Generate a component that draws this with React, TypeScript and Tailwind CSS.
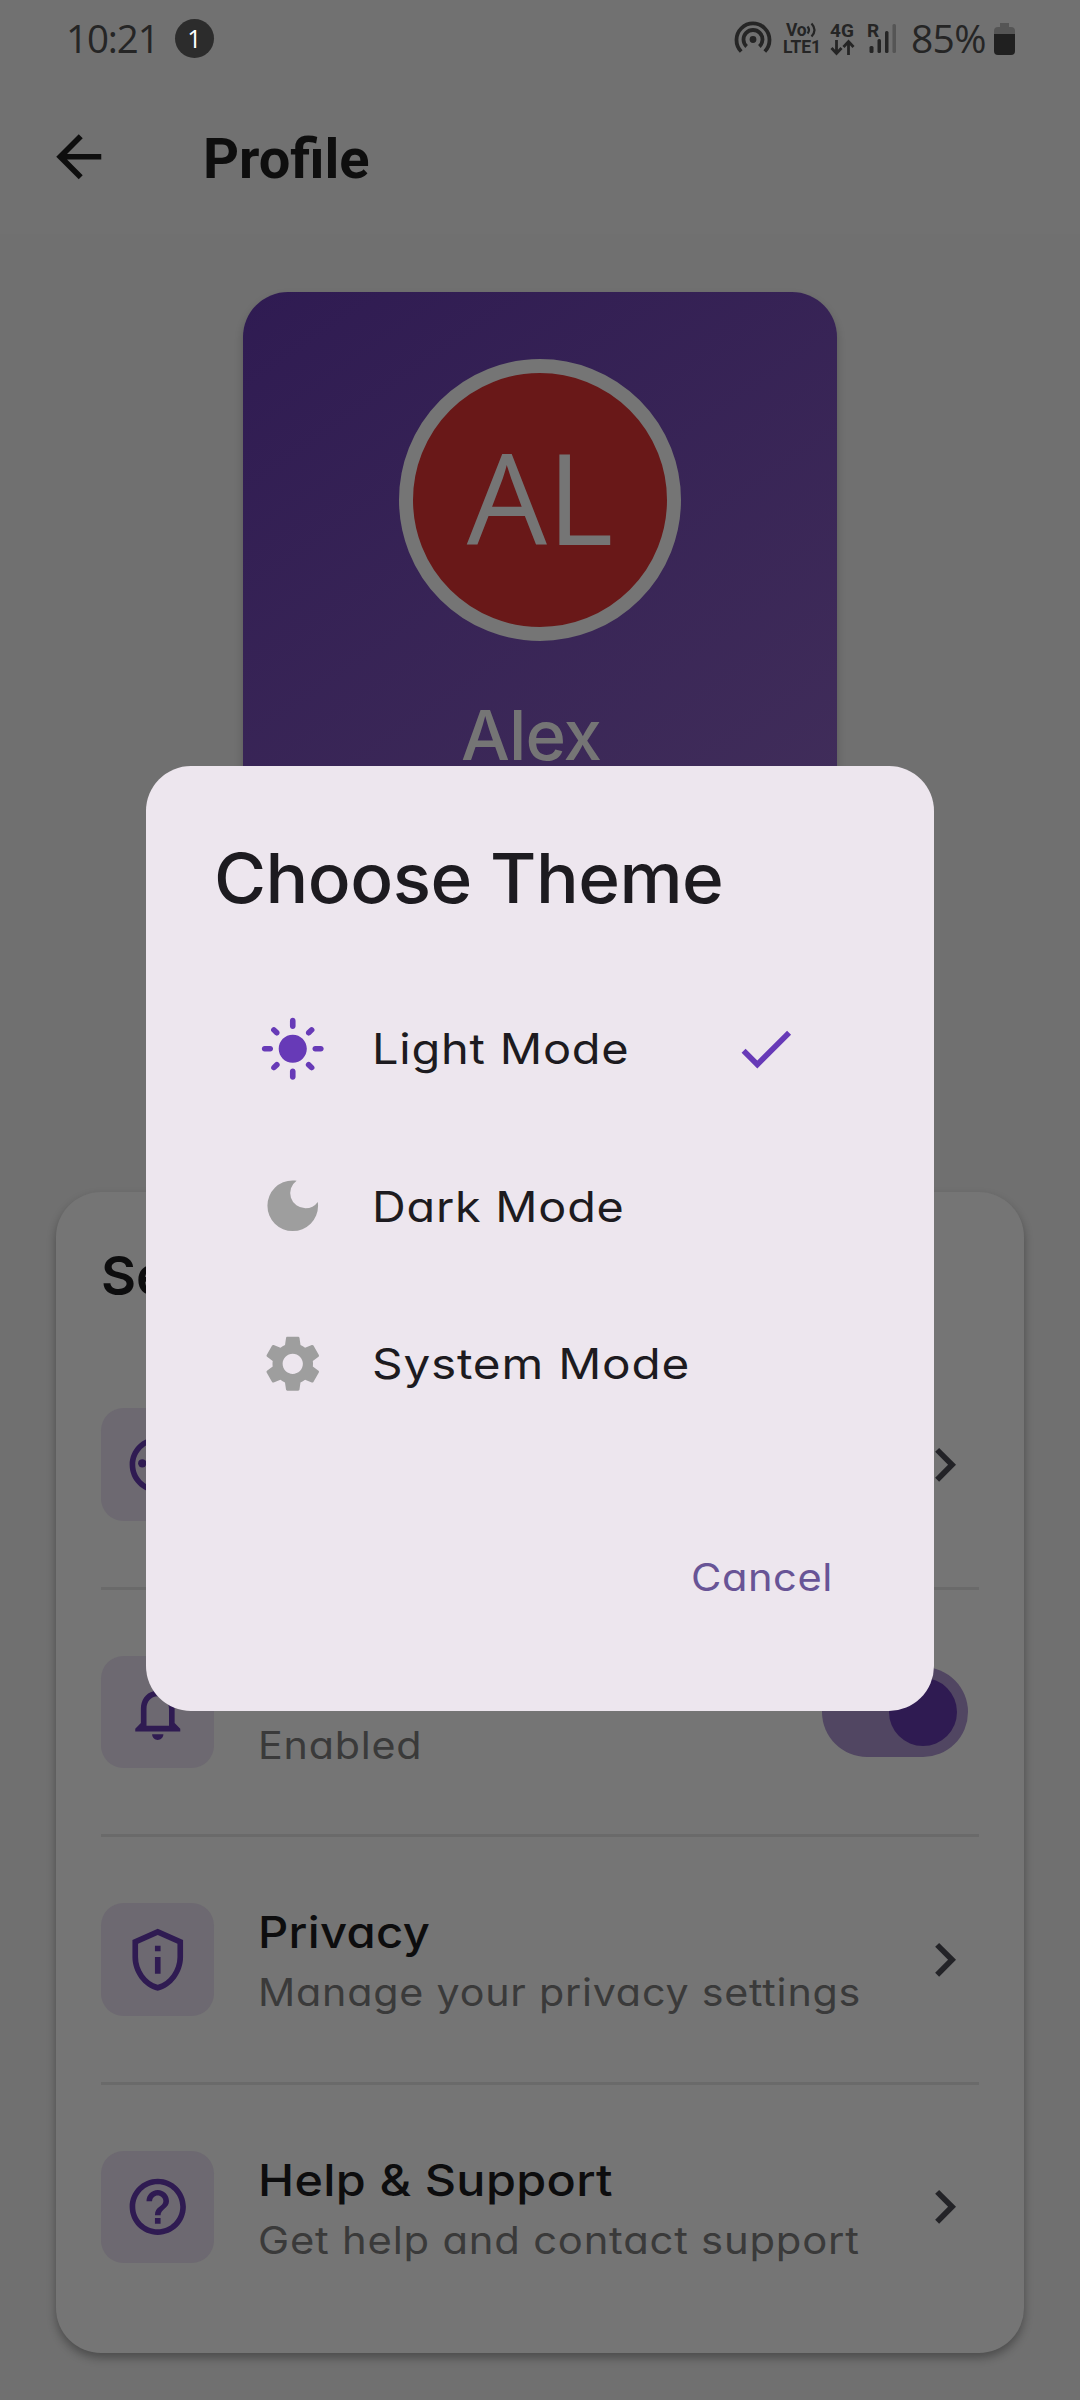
import type { ComponentType, ReactNode } from "react";
import {
  MdArrowBack,
  MdCheck,
  MdChevronRight,
  MdDarkMode,
  MdHelpOutline,
  MdLightMode,
  MdNotificationsNone,
  MdOutlinePalette,
  MdOutlinePrivacyTip,
  MdSettings,
} from "react-icons/md";

type Icon = ComponentType<{ className?: string }>;

function StatusBar() {
  return (
    <div className="flex h-[76px] items-center pl-[66px] pr-[65px] font-['Open_Sans',sans-serif] text-[#252525]">
      <span className="w-[109px] text-[38.5px] leading-[74px] tracking-[-1.1px]">10:21</span>
      <span className="flex size-[39px] items-center justify-center rounded-full bg-[#2c2c2c] text-[25px] leading-[36px] text-white">
        1
      </span>
      <div className="ml-auto flex h-[78px] items-center">
        <svg className="h-[36px] w-[38px]" viewBox="0 0 38 36" fill="none" stroke="currentColor" strokeWidth="3.8">
          <circle cx="19" cy="19.5" r="3.4" fill="currentColor" stroke="none" />
          <path d="M12.6 26.5a9.5 9.5 0 1 1 12.8 0" />
          <path d="M7.2 31.5a16.5 16.5 0 1 1 23.6 0" />
        </svg>
        <div className="mt-[2px] ml-[11px] flex w-[38px] flex-col font-['Roboto',sans-serif] text-[17.5px] leading-[17.5px] font-bold">
          <span className="flex items-center pl-[3px] tracking-[-0.3px]">
            Vo
            <svg className="h-[16px] w-[12px]" viewBox="0 0 12 16" fill="none" stroke="currentColor" strokeWidth="2.2">
              <path d="M1.5 4.5q3 3.500 0 7M5.500 1.500q6 6.500 0 13" />
            </svg>
          </span>
          <span className="tracking-[-0.1px]">LTE1</span>
        </div>
        <div className="mt-[1px] ml-[9px] flex w-[26px] flex-col font-['Roboto',sans-serif] text-[19px] leading-[17px] font-bold">
          <span>4G</span>
          <svg className="h-[17px] w-[25px]" viewBox="0 0 25 17" fill="none" stroke="currentColor" strokeWidth="2.8">
            <path d="M6.500 1v13M1.500 9l5 5.500 5-5.500M18.500 16V3M13.500 8l5-5.500 5 5.500" />
          </svg>
        </div>
        <div className="relative mt-[1px] ml-[11px] h-[34px] w-[30px] font-['Roboto',sans-serif]">
          <span className="absolute top-0 left-0 text-[19px] leading-[17px] font-bold">R</span>
          <svg className="absolute inset-0 h-[34px] w-[30px]" viewBox="0 0 30 34" fill="currentColor">
            <rect x="2.500" y="24" width="4" height="7" rx="1.500" />
            <rect x="10.500" y="17" width="3.500" height="14" rx="1.500" />
            <rect x="18" y="9" width="3.500" height="22" rx="1.500" />
            <rect x="25.500" y="2" width="3.500" height="29" rx="1.500" fill="#555555" />
          </svg>
        </div>
        <span className="ml-[14px] w-[83px] text-[39px] leading-[74px] tracking-[-0.7px]">85%</span>
        <svg className="mt-[1px] h-[32px] w-[21px]" viewBox="0 0 21 32">
          <path d="M6 0h9v4h2a4 4 0 0 1 4 4v4H0V8a4 4 0 0 1 4-4h2z" fill="#555555" />
          <path d="M0 11h21v17a4 4 0 0 1-4 4H4a4 4 0 0 1-4-4z" fill="#202020" />
        </svg>
      </div>
    </div>
  );
}

function ProfileCard() {
  return (
    <section className="mx-auto mt-[58px] flex h-[855px] w-[594px] flex-col items-center rounded-[45px] bg-[linear-gradient(145.2deg,#2f1b52,#47345d)] pt-[67px] shadow-[0_5px_9px_rgba(0,0,0,0.22)]">
      <div className="flex size-[282px] items-center justify-center rounded-full border-[14px] border-[#757575] bg-[#691818] pb-[8px]">
        <span className="font-['Open_Sans',sans-serif] text-[127px] leading-[246px] text-[#757575]">AL</span>
      </div>
      <h2 className="mt-[49px] mr-[18px] text-[69px] leading-[90px] font-[550] tracking-[-0.9px] text-[#757575]">Alex</h2>
    </section>
  );
}

interface RowProps {
  icon: Icon;
  title: string;
  titleClass?: string;
  detail: string;
  detailClass?: string;
  trailing?: ReactNode;
}

function SettingRow({ icon: RowIcon, title, titleClass = "", detail, detailClass = "", trailing }: RowProps) {
  return (
    <div className="flex h-[244.5px] items-center">
      <div className="flex size-[112.5px] items-center justify-center rounded-[22.5px] bg-[#6d6971]">
        <RowIcon className="size-[67.5px] text-[#2f1b52]" />
      </div>
      <div className="ml-[44.5px] flex flex-col items-start whitespace-nowrap">
        <span className={`origin-left text-[43.5px] leading-[68px] font-medium tracking-[0.3px] text-[#0d0d0e] ${titleClass}`}>
          {title}
        </span>
        <span className={`origin-left text-[37.5px] leading-[54px] tracking-[0.7px] text-[#3a3a3a] ${detailClass}`}>{detail}</span>
      </div>
      <div className="mr-[1px] ml-auto">{trailing ?? <MdChevronRight className="size-[67.5px] text-[#232327]" />}</div>
    </div>
  );
}

function Divider() {
  return <div className="h-[3px] bg-[#6a6a6a]" />;
}

function Switch() {
  return (
    <div className="mr-[10.5px] flex h-[90px] w-[146px] items-center justify-end rounded-full bg-[#514662] pr-[11px]">
      <div className="size-[67.5px] rounded-full bg-[#2f1b52]" />
    </div>
  );
}

function SettingsCard() {
  return (
    <section className="mx-[56px] mt-[45px] h-[1161px] rounded-[45px] bg-[#757575] px-[45px] pt-[45px] shadow-[0_5px_10px_rgba(0,0,0,0.32)]">
      <h2 className="h-[105px] text-[54px] leading-[78px] font-semibold text-[#0d0d0e]">Settings</h2>
      <SettingRow icon={MdOutlinePalette} title="Theme" detail="Light" />
      <Divider />
      <SettingRow
        icon={MdNotificationsNone}
        title="Notifications"
        titleClass="scale-x-[1.07]"
        detail="Enabled"
        detailClass="scale-x-[1.1]"
        trailing={<Switch />}
      />
      <Divider />
      <SettingRow
        icon={MdOutlinePrivacyTip}
        title="Privacy"
        titleClass="scale-x-[1.085]"
        detail="Manage your privacy settings"
        detailClass="scale-x-[1.1]"
      />
      <Divider />
      <SettingRow
        icon={MdHelpOutline}
        title="Help & Support"
        titleClass="scale-x-[1.115]"
        detail="Get help and contact support"
        detailClass="scale-x-[1.114]"
      />
    </section>
  );
}

interface OptionProps {
  icon: Icon;
  label: string;
  labelClass: string;
  selected?: boolean;
}

function ThemeOption({ icon: OptionIcon, label, labelClass, selected }: OptionProps) {
  return (
    <div className="flex h-[157.5px] items-center pr-[67px] pl-[45px]">
      <OptionIcon className={`size-[67.5px] ${selected ? "text-[#673ab7]" : "text-[#9e9e9e]"}`} />
      <span className={`mt-[2px] ml-[45.5px] origin-left text-[42.5px] leading-[68px] tracking-[0.7px] text-[#1d1b20] ${labelClass}`}>
        {label}
      </span>
      {selected && <MdCheck className="ml-auto size-[67.5px] text-[#673ab7]" />}
    </div>
  );
}

function ThemeDialog() {
  return (
    <div
      role="dialog"
      className="absolute top-[766px] left-[146px] flex h-[945px] w-[787.5px] flex-col rounded-[45px] bg-[#ede6ee] px-[67.5px] pt-[67px]"
    >
      <h1 className="origin-left scale-x-[1.03] text-[69px] leading-[90px] font-[550] tracking-[-0.5px] whitespace-nowrap text-[#1d1b20]">
        Choose Theme
      </h1>
      <div className="mt-[46.5px] flex flex-col">
        <ThemeOption icon={MdLightMode} label="Light Mode" labelClass="scale-x-[1.105]" selected />
        <ThemeOption icon={MdDarkMode} label="Dark Mode" labelClass="scale-x-[1.1]" />
        <ThemeOption icon={MdSettings} label="System Mode" labelClass="scale-x-[1.122]" />
      </div>
      <button className="mt-[108.500px] mr-[33px] origin-right scale-x-[1.11] self-end text-[37.5px] leading-[54px] tracking-[0.5px] text-[#685496]">
        Cancel
      </button>
    </div>
  );
}

export default function App() {
  return (
    <div className="relative flex h-[2400px] w-[1080px] flex-col overflow-hidden bg-[#707070] font-['Inter',sans-serif] [font-feature-settings:'cv11']">
      <header className="h-[234px] bg-[#717171]">
        <StatusBar />
        <div className="flex h-[162px] items-center pl-[45px]">
          <MdArrowBack className="size-[67.5px] text-[#0e0e0e]" />
          <h1 className="mt-[3px] ml-[90.5px] font-['Roboto',sans-serif] text-[56px] leading-[66px] font-bold text-[#0e0e0e]">
            Profile
          </h1>
        </div>
      </header>
      <ProfileCard />
      <SettingsCard />
      <ThemeDialog />
    </div>
  );
}
